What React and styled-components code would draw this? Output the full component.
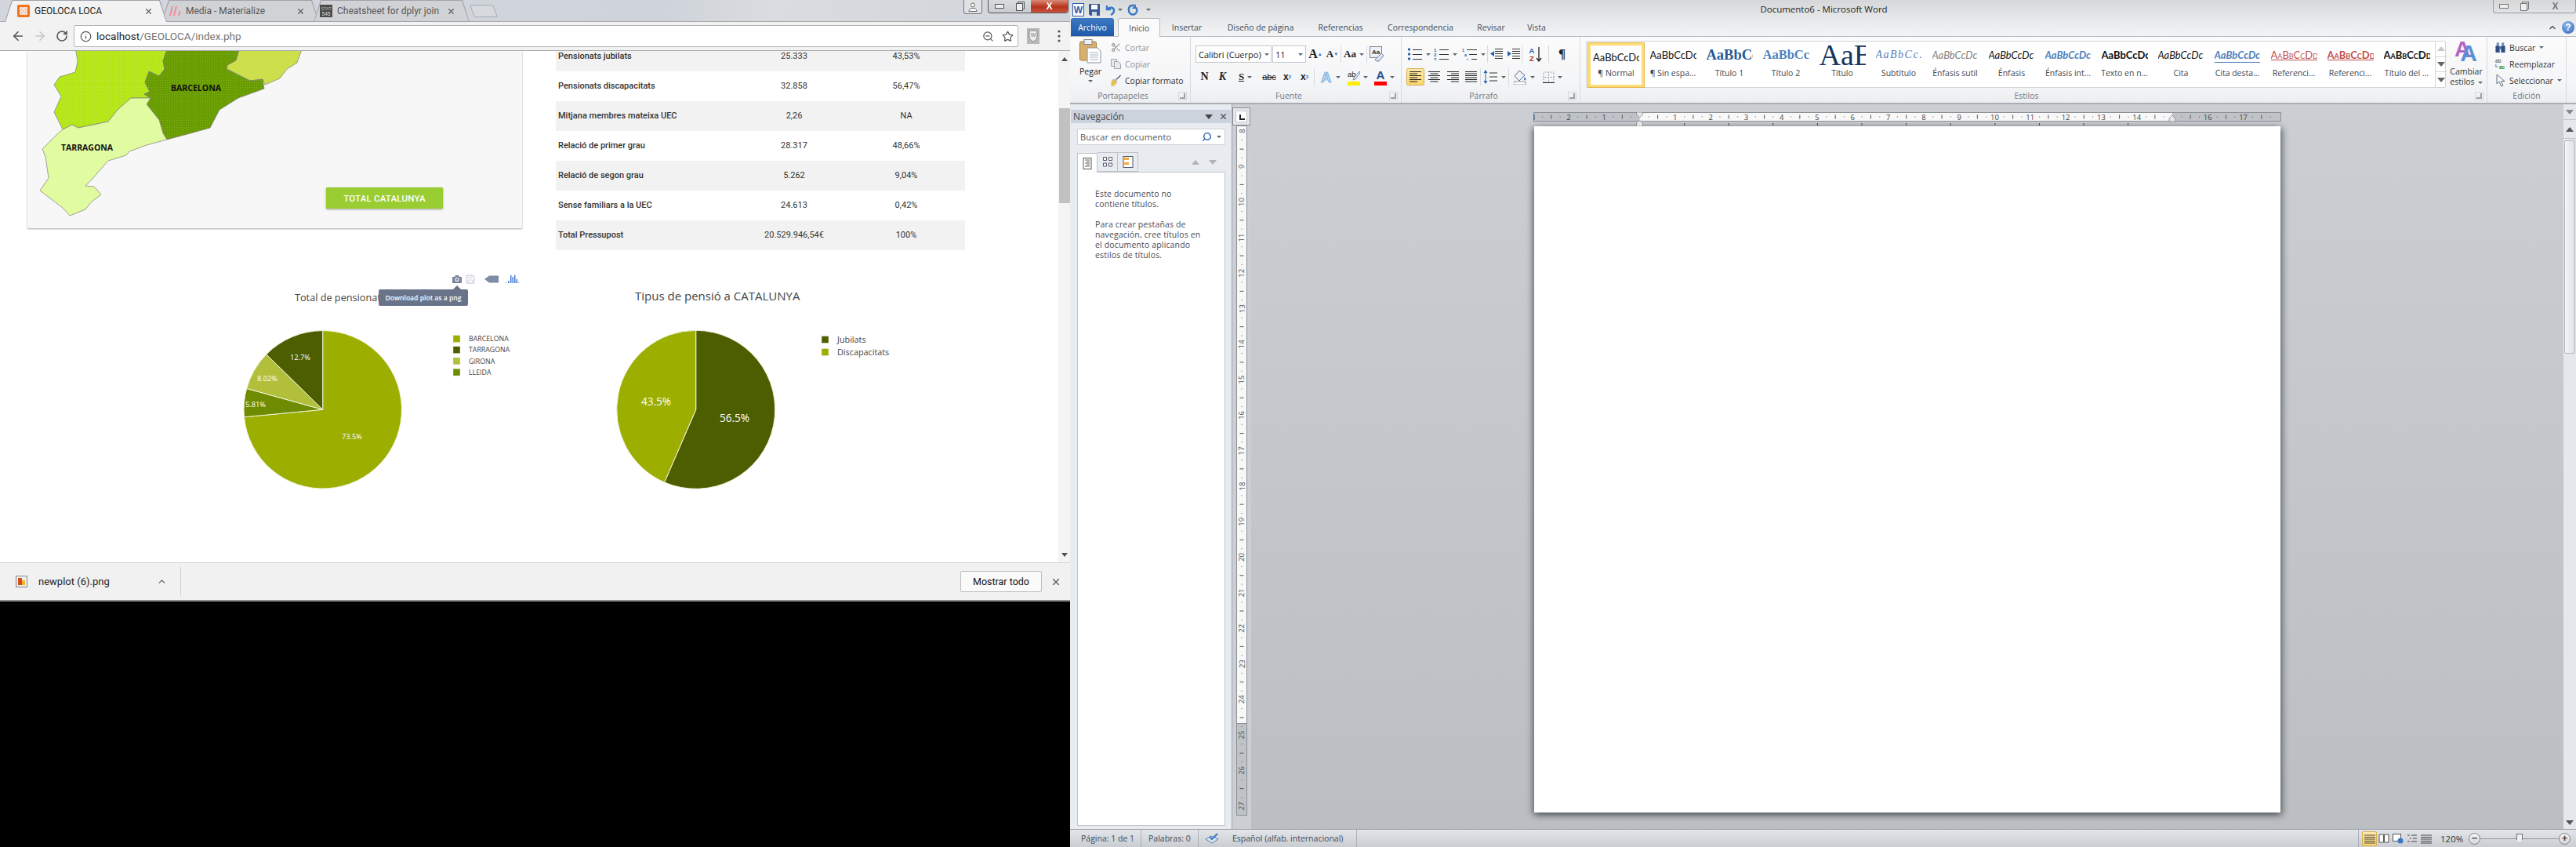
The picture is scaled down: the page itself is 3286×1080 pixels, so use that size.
import React from 'react';
import styled, { createGlobalStyle, css } from 'styled-components';
import { ArrowLeft, ArrowRight, RotateCw, Info, ZoomOut, Star, X, ChevronUp, Scissors, Search } from 'lucide-react';

const GlobalStyle = createGlobalStyle`
    html, body { margin: 0; padding: 0; background: #000; }
    * { box-sizing: border-box; }
`;

const WORD_FONT = '"Open Sans", "Noto Sans", sans-serif';

const Screen = styled.div`
    display: grid;
    grid-template-columns: 1365px 1921px;
    width: 3286px;
    height: 1080px;
    overflow: hidden;
`;

/* ---------- browser ---------- */
const BrowserColumn = styled.div`
    display: flex;
    flex-direction: column;
    height: 1080px;
    background: #000;
`;

const Browser = styled.div`
    display: flex;
    flex-direction: column;
    height: 767px;
    font-family: Roboto, sans-serif;
`;

const TabStrip = styled.div`
    display: flex;
    align-items: flex-end;
    height: 28px;
    padding-left: 6px;
    background: linear-gradient(100deg, #d3d7dd 0%, #cfd4da 62%, #d9dce0 72%, #d0d5db 100%);
    border-bottom: 1px solid #a5a8ab;
    position: relative;
`;

const Tab = styled.div`
    position: relative;
    display: flex;
    align-items: center;
    gap: 6px;
    width: ${p => p.$w}px;
    height: 28px;
    margin-right: -7px;
    margin-bottom: -1px;
    padding: 0 18px 0 ${p => p.$pad}px;
    color: #444;
    font-size: 12px;
    z-index: ${p => (p.$active ? 2 : 1)};
    background: #9fa3a7;
    clip-path: polygon(0 100%, 9px 0, calc(100% - 9px) 0, 100% 100%);
    &::before {
        content: '';
        position: absolute;
        inset: 1px 1px ${p => (p.$active ? 0 : 1)}px 1px;
        background: ${p => (p.$active ? '#f2f2f2' : '#d0d2d5')};
        clip-path: polygon(0 100%, 9px 0, calc(100% - 9px) 0, 100% 100%);
    }
    & > * { position: relative; }
`;

const TabTitle = styled.span`
    flex: 1;
    white-space: nowrap;
    overflow: hidden;
    color: ${p => (p.$active ? '#222' : '#555')};
`;

const NewTab = styled.div`
    width: 30px;
    height: 16px;
    margin: 0 0 5px 10px;
    border: 1px solid #a9adb2;
    border-radius: 2px;
    background: #d6d9dd;
    transform: skewX(20deg);
`;

const WindowButtons = styled.div`
    display: flex;
    align-items: flex-start;
    gap: 7px;
    margin-left: auto;
    margin-right: 2px;
    align-self: flex-start;
`;

const UserButton = styled.div`
    width: 24px;
    height: 18px;
    display: flex;
    align-items: center;
    justify-content: center;
    border: 1px solid #72767b;
    border-top: 0;
    border-radius: 0 0 4px 4px;
    background: #dfe2e5;
`;

const WinBox = styled.div`
    display: flex;
    width: ${p => p.$w}px;
    height: 17px;
    border: 1px solid ${p => p.$border};
    border-top: 0;
    border-radius: 0 0 4px 4px;
    overflow: hidden;
    background: ${p => p.$bg};
`;

const WinCell = styled.div`
    flex: ${p => p.$grow || 1};
    display: flex;
    align-items: center;
    justify-content: center;
    color: ${p => (p.$red ? '#fff' : '#777')};
    font: bold 12px "Liberation Sans", sans-serif;
    background: ${p => (p.$red ? 'linear-gradient(#d98a78, #b8321c 55%, #c9553f)' : 'transparent')};
`;

const Toolbar = styled.div`
    display: flex;
    align-items: center;
    height: 37px;
    padding-left: 9px;
    background: #f2f2f2;
    border-bottom: 1px solid #a9a9a9;
`;

const NavIcon = styled.div`
    width: 28px;
    margin-left: ${p => p.$gap || 0}px;
    display: flex;
    justify-content: center;
    color: ${p => p.$color};
`;

const Omnibox = styled.div`
    display: flex;
    align-items: center;
    width: 1205px;
    height: 28px;
    margin-left: 1px;
    padding: 0 0 0 7px;
    background: #fff;
    border: 1px solid #b4b4b4;
    border-radius: 2px;
    font-size: 13.5px;
    color: #222;
`;

const Url = styled.span`
    margin-left: 6px;
    flex: 1;
    span { color: #757575; }
`;

const OmniIcon = styled.div`
    width: 25px;
    display: flex;
    justify-content: center;
    color: #555;
`;

const Viewport = styled.div`
    display: flex;
    height: 652px;
    background: #fff;
`;

const Page = styled.div`
    width: 1350px;
    overflow: hidden;
`;

const TopRow = styled.div`
    display: flex;
    align-items: flex-start;
`;

const MapCard = styled.div`
    display: flex;
    align-items: flex-end;
    width: 631px;
    height: 226px;
    margin-left: 35px;
    background: #f7f7f7;
    box-shadow: 0 1px 2px rgba(0, 0, 0, 0.35);
`;

const MapDrawing = styled.svg`
    flex: none;
`;

const CatalunyaButton = styled.div`
    display: flex;
    align-items: center;
    justify-content: center;
    width: 149px;
    height: 27px;
    margin-bottom: 25px;
    background: #9acd32;
    color: #fff;
    font-size: 11.5px;
    font-weight: 500;
    letter-spacing: 0.2px;
    border-radius: 1px;
    box-shadow: 0 1px 3px rgba(0, 0, 0, 0.35);
`;

const DataTable = styled.table`
    width: 522px;
    margin-left: 43px;
    border-collapse: collapse;
    table-layout: fixed;
    font-size: 11px;
    color: #333;
    tr:nth-child(odd) { background: #f2f2f2; }
`;

const Cell = styled.td`
    height: ${p => (p.$clipped ? 26 : 38)}px;
    padding: ${p => (p.$clipped ? '0 3px 12px' : '0 3px')};
    line-height: 14px;
    text-align: ${p => (p.$name ? 'left' : 'center')};
    font-weight: ${p => (p.$name ? 500 : 400)};
    width: ${p => p.$w}px;
`;

const PlotRow = styled.div`
    display: flex;
    margin: 11px 0 0 240px;
`;

const PlotWrap = styled.div`
    position: relative;
    height: 360px;
`;

const PlotDrawing = styled.svg`
    display: block;
    font-family: "Open Sans", sans-serif;
`;

const PlotTooltip = styled.div`
    position: absolute;
    left: 243px;
    top: 39px;
    width: 114px;
    height: 21px;
    display: flex;
    align-items: center;
    justify-content: center;
    background: #69738a;
    border-radius: 2px;
    color: #fff;
    font: 600 8.6px "Open Sans", sans-serif;
    white-space: nowrap;
    &::before {
        content: '';
        position: absolute;
        top: -5px;
        left: 95px;
        border: 5px solid transparent;
        border-top: 0;
        border-bottom-color: #69738a;
    }
`;

const ScrollTrack = styled.div`
    position: relative;
    width: 15px;
    background: #f4f4f4;
    color: #555;
`;

const Thumb = styled.div`
    position: absolute;
    left: 1px;
    right: 0;
    top: 73px;
    height: 121px;
    background: #c1c1c1;
`;

const Arrow = styled.div`
    position: absolute;
    left: 4px;
    ${p => p.$pos};
    width: 0;
    height: 0;
    border-left: 4px solid transparent;
    border-right: 4px solid transparent;
    ${p => (p.$up ? 'border-bottom: 5px solid #505050;' : 'border-top: 5px solid #505050;')}
`;

const DownloadBar = styled.div`
    display: flex;
    align-items: center;
    height: 50px;
    background: #f1f1f1;
    border-top: 1px solid #d2d2d2;
    border-bottom: 2px solid #8d8d8d;
    font-size: 12.5px;
`;

const DownloadItem = styled.div`
    display: flex;
    align-items: center;
    width: 231px;
    height: 37px;
    padding-left: 20px;
    border-right: 1px solid #cfcfcf;
`;

const FileName = styled.span`
    margin-left: 14px;
    flex: 1;
    font-size: 13px;
    color: #222;
`;

const ChevronSlot = styled.div`
    display: flex;
    margin-right: 17px;
    color: #555;
`;

const ShowAll = styled.div`
    margin-left: auto;
    display: flex;
    align-items: center;
    justify-content: center;
    width: 104px;
    height: 27px;
    background: #fafafa;
    border: 1px solid #bdbdbd;
    border-radius: 2px;
    color: #111;
`;

const BarClose = styled.div`
    width: 36px;
    display: flex;
    justify-content: center;
    color: #555;
`;

/* ---------- word ---------- */
const Word = styled.div`
    display: flex;
    flex-direction: column;
    height: 1080px;
    font-family: ${WORD_FONT};
    font-size: 10.5px;
    color: #3b3b3b;
`;

const TitleArea = styled.div`
    background: linear-gradient(#d5d7d9 0%, #e4e6e7 45%, #f3f4f5 100%);
`;

const TitleBar = styled.div`
    display: grid;
    grid-template-columns: 108px 1fr 106px;
    height: 24px;
`;

const Qat = styled.div`
    display: flex;
    align-items: center;
    gap: 6px;
    padding-left: 3px;
    white-space: nowrap;
`;

const WindowTitle = styled.div`
    text-align: center;
    font-size: 11.5px;
    line-height: 24px;
    color: #222;
`;

const TabRow = styled.div`
    display: flex;
    align-items: flex-end;
    height: 23px;
    padding-left: 1px;
    border-bottom: 1px solid #b9bcc0;
    position: relative;
`;

const FileTab = styled.div`
    width: 55px;
    height: 23px;
    margin-right: 5px;
    display: flex;
    align-items: center;
    justify-content: center;
    color: #fff;
    background: linear-gradient(#3d78c4, #1e5aa8);
    border-radius: 3px 3px 0 0;
`;

const RibbonTab = styled.div`
    width: ${p => p.$w}px;
    height: 23px;
    display: flex;
    align-items: center;
    justify-content: center;
    white-space: nowrap;
    color: #3d4a5a;
    ${p => p.$active && css`
        background: #fbfbfc;
        border: 1px solid #b9bcc0;
        border-bottom: 0;
        border-radius: 3px 3px 0 0;
        margin-bottom: -1px;
        height: 24px;
    `}
`;

const TabHelp = styled.div`
    margin-left: auto;
    display: flex;
    align-items: center;
    gap: 6px;
    padding: 0 2px 3px 0;
    color: #444;
`;

const HelpBall = styled.div`
    width: 16px;
    height: 16px;
    border-radius: 50%;
    background: radial-gradient(circle at 40% 30%, #8db7ea, #2c64b8);
    color: #fff;
    font: bold 12px/16px "Liberation Sans", sans-serif;
    text-align: center;
`;

const Ribbon = styled.div`
    display: flex;
    height: 86px;
    background: linear-gradient(#fbfbfc 0%, #f4f5f6 70%, #eceef1 100%);
    border-bottom: 2px solid #a9adb3;
`;

const Group = styled.div`
    display: flex;
    flex-direction: column;
    width: ${p => p.$w}px;
    border-right: 1px solid #d7dade;
`;

const GroupBody = styled.div`
    flex: 1;
    display: flex;
    min-height: 0;
    padding-top: ${p => p.$top ?? 3}px;
    padding-left: ${p => p.$left ?? 0}px;
`;

const GroupLabel = styled.div`
    display: flex;
    align-items: center;
    height: 18px;
    color: #707a86;
`;

const LabelText = styled.span`
    flex: 1;
    text-align: center;
`;

const Launcher = styled.div`
    width: 7px;
    height: 7px;
    margin: 0 6px 0 5px;
    border-right: 2px solid #9aa0a6;
    border-bottom: 2px solid #9aa0a6;
    outline: 1px solid #d5d8dc;
    outline-offset: 1px;
`;

const PasteColumn = styled.div`
    width: 52px;
    display: flex;
    flex-direction: column;
    align-items: center;
    color: #222;
    line-height: 14px;
`;

const PasteLabel = styled.span`
    margin-top: 3px;
`;

const Caret = styled.span`
    display: inline-block;
    width: 0;
    height: 0;
    margin: ${p => p.$margin || '0 0 0 4px'};
    vertical-align: middle;
    border-left: 3px solid transparent;
    border-right: 3px solid transparent;
    border-top: 3px solid #60666e;
`;

const MenuColumn = styled.div`
    display: flex;
    flex-direction: column;
`;

const MenuRow = styled.div`
    display: flex;
    align-items: center;
    height: 22px;
    gap: 5px;
    white-space: nowrap;
    color: ${p => (p.$off ? '#8e949b' : '#333')};
`;

const MenuIcon = styled.div`
    width: 13px;
    display: flex;
    justify-content: center;
    color: #8a8f96;
`;

const ToolColumn = styled.div`
    display: flex;
    flex-direction: column;
    gap: 7px;
`;

const ToolRow = styled.div`
    display: flex;
    align-items: center;
    height: 22px;
`;

const Tool = styled.div`
    width: ${p => p.$w}px;
    height: 22px;
    display: flex;
    align-items: center;
    justify-content: center;
    color: ${p => p.$color || '#222'};
    font: ${p => p.$font || 'inherit'};
    border-right: ${p => (p.$sep ? '1px solid #d7dade' : '0')};
    ${p => p.$on && css`
        background: linear-gradient(#fde8a8, #fbd56d);
        border: 1px solid #d9ae4e;
        border-radius: 2px;
    `}
`;

const FontBox = styled.div`
    display: flex;
    align-items: center;
    width: ${p => p.$w}px;
    height: 22px;
    padding: 0 3px;
    background: #fff;
    border: 1px solid #c6cad0;
    margin-right: 1px;
    color: #222;
    font-size: 11px;
    white-space: nowrap;
    & > span:first-child { flex: 1; }
`;

const Sup = styled.sup`
    font-size: 6px;
    color: #2e6ab1;
`;

const Sub = styled.sub`
    font-size: 6px;
    color: #2e6ab1;
`;

const Gallery = styled.div`
    display: flex;
    width: 1097px;
    height: 60px;
    margin-top: 2px;
    padding: 2px 0 0 2px;
    background: #fff;
    border: 1px solid #d1d5da;
    border-radius: 2px;
`;

const StyleItem = styled.div`
    width: 72px;
    height: 56px;
    flex: none;
    display: flex;
    flex-direction: column;
    align-items: center;
    ${p => p.$active && css`
        width: 71px;
        margin-right: 1px;
        border: 3px solid #fddc75;
        outline: 1px solid #e3b651;
    `}
`;

const sampleKinds = {
    normal: css`font-family: Lato, sans-serif; font-size: 13px; color: #111;`,
    h1: css`font-family: "Liberation Serif", serif; font-size: 18.5px; font-weight: bold; color: #245a96;`,
    h2: css`font-family: "Liberation Serif", serif; font-size: 16.5px; font-weight: bold; color: #4f81bd;`,
    title: css`font-family: "Liberation Serif", serif; font-size: 38px; color: #17365d;`,
    subtitle: css`font-family: "Liberation Serif", serif; font-size: 14px; font-style: italic; letter-spacing: 1.5px; color: #4f81bd;`,
    subtle: css`font-family: Lato, sans-serif; font-size: 13px; font-style: italic; color: #808080;`,
    emphasis: css`font-family: Lato, sans-serif; font-size: 13px; font-style: italic; color: #111;`,
    intense: css`font-family: Lato, sans-serif; font-size: 13px; font-style: italic; font-weight: bold; color: #4f81bd;`,
    strong: css`font-family: Lato, sans-serif; font-size: 13px; font-weight: bold; color: #111;`,
    quote: css`font-family: Lato, sans-serif; font-size: 13px; font-style: italic; color: #111;`,
    quoteStrong: css`font-family: Lato, sans-serif; font-size: 13px; font-style: italic; font-weight: bold; color: #4f81bd; border-bottom: 1px solid #4f81bd;`,
    ref: css`font-family: Lato, sans-serif; font-size: 13px; font-variant: small-caps; color: #c0504d; text-decoration: underline;`,
    refStrong: css`font-family: Lato, sans-serif; font-size: 13px; font-variant: small-caps; font-weight: bold; color: #c0504d; text-decoration: underline;`,
    book: css`font-family: Lato, sans-serif; font-size: 13px; font-variant: small-caps; font-weight: bold; color: #111;`,
};

const Sample = styled.div`
    width: 59px;
    height: 30px;
    display: flex;
    align-items: center;
    justify-content: flex-start;
    overflow: hidden;
    white-space: nowrap;
    line-height: 30px;
    span { display: block; line-height: ${p => (p.$kind === 'quoteStrong' ? '18px' : '30px')}; ${p => sampleKinds[p.$kind]} }
`;

const StyleName = styled.div`
    margin-top: ${p => (p.$active ? -2 : 1)}px;
    color: #3f4650;
    white-space: nowrap;
`;

const GalleryArrows = styled.div`
    display: flex;
    flex-direction: column;
    flex: none;
    width: 15px;
    margin: -2px 0 0 0;
    border-left: 1px solid #d1d5da;
`;

const GalleryArrow = styled.div`
    flex: 1;
    display: flex;
    align-items: center;
    justify-content: center;
    border-bottom: 1px solid #d1d5da;
    &:last-child { border-bottom: 0; }
`;

const ChangeStyles = styled.div`
    width: 53px;
    display: flex;
    flex-direction: column;
    align-items: center;
    line-height: 13px;
    color: #333;
`;

const ChangeLabel = styled.span`
    margin-top: 6px;
`;

const StatusBar = styled.div`
    display: flex;
    align-items: center;
    height: 23px;
    background: linear-gradient(#e2e5e9, #c9cdd2);
    border-top: 1px solid #9ea2a8;
    color: #3e4a5a;
    white-space: nowrap;
`;

const StatusCell = styled.div`
    display: flex;
    align-items: center;
    height: 100%;
    width: ${p => p.$w}px;
    padding-left: ${p => p.$pad ?? 9}px;
    border-right: 1px solid #abafb5;
`;

const Language = styled.span`
    margin-left: 17px;
`;

const StatusRight = styled.div`
    display: flex;
    align-items: center;
    height: 100%;
    margin-left: auto;
    padding: 0 7px 0 4px;
    border-left: 1px solid #abafb5;
`;

const ViewButton = styled.div`
    width: ${p => p.$w || 18}px;
    height: 19px;
    display: flex;
    align-items: center;
    justify-content: center;
    ${p => p.$on && css`
        background: linear-gradient(#fde8a8, #fbd56d);
        border: 1px solid #d9ae4e;
        border-radius: 2px;
    `}
`;

const ZoomText = styled.div`
    width: 36px;
    margin-left: 9px;
    font-size: 11.5px;
    color: #333;
`;

const ZoomDot = styled.div`
    width: 15px;
    height: 15px;
    flex: none;
    border-radius: 50%;
    border: 1px solid #7d8187;
    background: linear-gradient(#f8f8f8, #d3d6da);
    display: flex;
    align-items: center;
    justify-content: center;
    color: #444;
    font: bold 13px/12px "Liberation Sans", sans-serif;
`;

const ZoomTrack = styled.div`
    position: relative;
    width: 100px;
    height: 1px;
    background: #9498a0;
`;

const ZoomThumb = styled.div`
    position: absolute;
    left: 46px;
    top: -6px;
    width: 8px;
    height: 12px;
    background: #eef0f2;
    border: 1px solid #6f7379;
    clip-path: polygon(0 0, 100% 0, 100% 65%, 50% 100%, 0 65%);
`;

const WorkArea = styled.div`
    flex: 1;
    display: flex;
    min-height: 0;
    background: linear-gradient(#cbced3, #bcbfc3);
`;

const NavPane = styled.div`
    display: flex;
    flex-direction: column;
    width: 207px;
    padding: 7px 8px 4px 9px;
    background: #e8ecf1;
    border-right: 1px solid #9ea3aa;
    position: relative;
`;

const NavHeader = styled.div`
    display: flex;
    align-items: center;
    justify-content: space-between;
    height: 17px;
    margin: 0 -7px 7px -8px;
    padding: 0 4px 0 3px;
    background: #ccd3dd;
    font-size: 12px;
    color: #3e4650;
`;

const NavHeaderTools = styled.span`
    display: flex;
    align-items: center;
    gap: 8px;
`;

const NavSearch = styled.div`
    display: flex;
    align-items: center;
    height: 21px;
    padding: 0 4px 0 3px;
    background: #fff;
    border: 1px solid #ccd1d8;
    color: #555;
    font-size: 11px;
    letter-spacing: 0.2px;
    margin-bottom: 9px;
`;

const NavSearchText = styled.span`
    flex: 1;
`;

const NavSearchIcon = styled.div`
    display: flex;
    color: #2a62ad;
    transform: scaleX(-1);
`;

const NavTabs = styled.div`
    display: flex;
    align-items: flex-end;
    height: 25px;
`;

const NavTab = styled.div`
    width: 26px;
    height: 25px;
    display: flex;
    align-items: center;
    justify-content: center;
    border: 1px solid #bdc3cb;
    border-left-width: ${p => (p.$first ? 1 : 0)}px;
    border-bottom: ${p => (p.$first ? '0' : '1px solid #bdc3cb')};
    background: ${p => (p.$first ? '#fff' : '#e8ecf1')};
    margin-bottom: ${p => (p.$first ? -1 : 0)}px;
    position: relative;
`;

const NavArrows = styled.div`
    margin-left: auto;
    display: flex;
    gap: 12px;
    padding: 0 11px 9px 0;
`;

const NavContent = styled.div`
    flex: 1;
    padding: 21px 8px 0 22px;
    background: #fff;
    border: 1px solid #bdc3cb;
    line-height: 13px;
    font-size: 10.5px;
    letter-spacing: 0.15px;
    color: #4a4a55;
    p { margin: 0 0 13px; }
`;

const RulerColumn = styled.div`
    width: 24px;
    display: flex;
    flex-direction: column;
    padding-top: 4px;
    background: #cbced3;
`;

const RulerCorner = styled.div`
    width: 23px;
    height: 23px;
    padding: 3px;
    border: 1px solid #8b9097;
    background: #e4e7ea;
`;

const RulerCornerInner = styled.div`
    width: 15px;
    height: 15px;
    background: #fff;
    border: 1px solid #c5c8cc;
    display: flex;
    align-items: center;
    justify-content: center;
    &::before {
        content: '';
        width: 5px;
        height: 5px;
        margin: 0 0 -1px 1px;
        border-left: 2px solid #222;
        border-bottom: 2px solid #222;
    }
`;

const VerticalRuler = styled.svg`
    display: block;
    margin-left: 5px;
`;

const DocArea = styled.div`
    flex: 1;
    padding-top: 10px;
    overflow: hidden;
    background: linear-gradient(#cbced3, #bbbec2);
`;

const HorizontalRuler = styled.svg`
    display: block;
    margin-left: 360px;
`;

const Sheet = styled.div`
    width: 952px;
    height: 875px;
    margin-left: 361px;
    background: #fff;
    box-shadow: -2px 2px 8px rgba(60, 64, 70, 0.65), 3px 3px 8px rgba(60, 64, 70, 0.55);
`;

const WordScroll = styled.div`
    display: flex;
    flex-direction: column;
    align-items: center;
    width: 16px;
    background: #e4e7ec;
`;

const ScrollCell = styled.div`
    width: 16px;
    height: ${p => p.$h}px;
    display: flex;
    align-items: center;
    justify-content: center;
    border-bottom: ${p => (p.$line ? '1px solid #c3c7cd' : 0)};
    color: #555;
    font-size: 9px;
`;

const ScrollThumb = styled.div`
    width: 14px;
    height: 272px;
    margin-top: 2px;
    margin-bottom: auto;
    background: linear-gradient(90deg, #f3f5f7, #dde1e6);
    border: 1px solid #b3b7bd;
    border-radius: 2px;
`;

/* ---------- drawings ---------- */
const XamppIcon = () => (
    <svg width="16" height="16" viewBox="0 0 16 16">
        <rect width="16" height="16" rx="2" fill="#f0741f" />
        <path d="M4 4h3v3H4zM9 4h3v3H9zM4 9h3v3H4zM9 9h3v3H9z" fill="none" stroke="#fff" strokeWidth="1.5" />
    </svg>
);

const MaterializeIcon = () => (
    <svg width="15" height="12" viewBox="0 0 15 12">
        <path d="M0 12 3 0h2L2 12zM5 12 8 0h2L7 12zM11 12l1.5-6h2L13 12z" fill="#f38b98" />
    </svg>
);

const StatIcon = () => (
    <svg width="16" height="16" viewBox="0 0 16 16">
        <rect width="16" height="16" fill="#4b4b4b" />
        <text x="8" y="7" fontSize="5.5" fill="#bbb" textAnchor="middle" fontFamily="Liberation Sans">STAT</text>
        <text x="8" y="14" fontSize="6.5" fill="#ddd" textAnchor="middle" fontFamily="Liberation Sans">545</text>
    </svg>
);

const ShieldIcon = () => (
    <svg width="16" height="20" viewBox="0 0 16 20">
        <rect width="16" height="20" fill="#b8b8b8" />
        <path d="M3 3h10v8c0 3-3 5-5 6-2-1-5-3-5-6z" fill="#eee" stroke="#888" />
        <text x="8" y="11" fontSize="7" fill="#777" textAnchor="middle" fontFamily="Liberation Sans">W</text>
    </svg>
);

const MenuDots = () => (
    <svg width="4" height="16">
        <circle cx="2" cy="2" r="1.6" fill="#555" />
        <circle cx="2" cy="8" r="1.6" fill="#555" />
        <circle cx="2" cy="14" r="1.6" fill="#555" />
    </svg>
);

const UserIcon = () => (
    <svg width="12" height="12" viewBox="0 0 12 12">
        <circle cx="6" cy="3.5" r="2.5" fill="#fff" stroke="#666" />
        <path d="M1 11.5c0-3 2-4 5-4s5 1 5 4z" fill="#fff" stroke="#666" />
    </svg>
);

const MinimizeGlyph = ({ color }) => (
    <svg width="12" height="7">
        <rect x=".5" y=".5" width="11" height="5" fill="#eee" stroke={color} />
    </svg>
);

const RestoreGlyph = ({ color }) => (
    <svg width="12" height="12">
        <rect x="2.5" y=".5" width="8" height="9" fill="none" stroke={color} />
        <rect x=".5" y="2.5" width="8" height="9" fill="#eee" stroke={color} />
    </svg>
);

const PngFileIcon = () => (
    <svg width="15" height="15" viewBox="0 0 15 15">
        <rect x=".5" y=".5" width="14" height="14" fill="#eee" stroke="#888" />
        <path d="M3 3h5v9H3z" fill="#d8491f" />
        <path d="M8 6h4v6H8z" fill="#efb52c" />
    </svg>
);

const WordLogo = () => (
    <svg width="15" height="17" viewBox="0 0 15 17">
        <rect x="0.5" y="0.5" width="14" height="16" fill="#fff" stroke="#2a5caa" />
        <text x="7.5" y="13" fontSize="12" fontWeight="bold" fill="#2a5caa" textAnchor="middle" fontFamily="Liberation Sans">W</text>
    </svg>
);

const SaveIcon = () => (
    <svg width="14" height="15" viewBox="0 0 14 15">
        <path d="M0 0h14v15H2l-2-2z" fill="#3b5a94" />
        <rect x="3" y="1" width="8" height="6" fill="#fff" />
        <rect x="4" y="10" width="6" height="5" fill="#cfd6e3" />
    </svg>
);

const UndoIcon = () => (
    <svg width="14" height="15" viewBox="0 0 14 15" fill="none">
        <path d="M3 2v5h5" stroke="#3a78c4" strokeWidth="2.4" />
        <path d="M3.5 7C6 3.5 12 4 12 8.5c0 2.5-2 4.5-4 5.5" stroke="#3a78c4" strokeWidth="2.4" />
    </svg>
);

const RedoIcon = () => (
    <svg width="14" height="15" viewBox="0 0 14 15" fill="none">
        <path d="M9 1.5 4 2.5C1 4.5 1 10 4 12.5c3 2 7 1 8-2.5 .5-2 0-4-1-5.500" stroke="#3a78c4" strokeWidth="2.4" />
        <path d="M11 0v6H6" fill="#3a78c4" />
    </svg>
);

const PasteIcon = () => (
    <svg width="28" height="31" viewBox="0 0 28 31">
        <rect x="0.5" y="3" width="21" height="24" rx="2" fill="#d8b06a" stroke="#a57f3f" />
        <rect x="6" y="0.5" width="10" height="6" fill="#eceff3" stroke="#808690" />
        <path d="M10 11h13l4 4v15H10z" fill="#fff" stroke="#8b929b" />
        <path d="M13 17h11M13 20h11M13 23h11M13 26h11" stroke="#9fb0c7" />
    </svg>
);

const CopyIcon = () => (
    <svg width="13" height="13" viewBox="0 0 13 13" fill="#e8eaed" stroke="#a0a4aa">
        <path d="M.5.5h7v9h-7z" />
        <path d="M4.5 3.5h5l3 3v6h-8z" />
    </svg>
);

const BrushIcon = () => (
    <svg width="14" height="15" viewBox="0 0 14 15">
        <path d="M13 0 14 1 8 7 7 6z" fill="#4d5d7c" />
        <path d="M6 5l3 3-1 2-4-4z" fill="#b8bcc4" />
        <path d="M3.5 6 8 10.5c-1 2.5-3.5 4-7 4.5 1-1 0-1.5 0-3 0-2 1-4.5 2.5-6z" fill="#efc74e" stroke="#b08a25" strokeWidth=".6" />
    </svg>
);

const ClearIcon = () => (
    <svg width="18" height="21" viewBox="0 0 18 21">
        <rect x="0.5" y="0.5" width="15" height="14" fill="#eef2f7" stroke="#7b8696" />
        <text x="8" y="10" fontSize="8" fontWeight="bold" fill="#333" textAnchor="middle" fontFamily="Liberation Sans">Aa</text>
        <path d="M9 15l6-6 3 3-6 7h-3l-2-2z" fill="#dfe6f2" stroke="#6d7f9c" />
    </svg>
);

const ListIcon = ({ marks }) => (
    <svg width="20" height="16" viewBox="0 0 20 16">
        {[2, 8, 14].map((y, i) => (
            <g key={y}>
                {marks === 'dots' && <circle cx="2.5" cy={y} r="1.7" fill="#2a62ad" />}
                {marks === 'nums' && <text x="0" y={y + 2.5} fontSize="6" fontWeight="bold" fill="#2a62ad" fontFamily="Liberation Sans">{i + 1}</text>}
                {marks === 'tree' && <text x={i * 3} y={y + 2.5} fontSize="5.5" fontWeight="bold" fill="#2a62ad" fontFamily="Liberation Sans">{['1', 'a', 'i'][i]}</text>}
                <rect x={marks === 'tree' ? 6 + i * 3 : 7} y={y} width={marks === 'tree' ? 13 - i * 3 : 12} height="1" fill="#333" />
            </g>
        ))}
    </svg>
);

const IndentIcon = ({ dir }) => (
    <svg width="18" height="16" viewBox="0 0 18 16">
        {[1, 4, 7, 10, 13].map(y => <rect key={y} x="7" y={y} width="10" height="1" fill="#333" />)}
        <path d={dir === 'left' ? 'M6 4v7L1 7.5z' : 'M1 4v7l5-3.5z'} fill="#2a62ad" />
    </svg>
);

const SortIcon = () => (
    <svg width="19" height="21" viewBox="0 0 19 21">
        <text x="5" y="9" fontSize="9.5" fontWeight="bold" fill="#2a62ad" textAnchor="middle" fontFamily="Liberation Sans">A</text>
        <text x="5" y="19" fontSize="9.5" fontWeight="bold" fill="#a0342d" textAnchor="middle" fontFamily="Liberation Sans">Z</text>
        <path d="M14 1v17M11 15l3 4 3-4" fill="none" stroke="#222" strokeWidth="1.3" />
    </svg>
);

const AlignIcon = ({ mode }) => {
    const lines = [0, 1, 2, 3, 4, 5];
    const short = mode === 'justify' ? 15 : 10;
    return (
        <svg width="15" height="14" viewBox="0 0 15 14">
            {lines.map(i => {
                const w = i % 2 ? short : 15;
                const x = mode === 'right' ? 15 - w : mode === 'center' ? (15 - w) / 2 : 0;
                return <rect key={i} x={x} y={i * 2.5} width={w} height="1" fill="#222" />;
            })}
        </svg>
    );
};

const SpacingIcon = () => (
    <svg width="19" height="20" viewBox="0 0 19 20">
        <path d="M3 1 .5 5h5zM3 19 .5 15h5zM2.500 5h1v10h-1z" fill="#2a62ad" />
        <path d="M8 5h10M8 10h10M8 15h10" stroke="#333" />
    </svg>
);

const ShadeIcon = () => (
    <svg width="17" height="19" viewBox="0 0 17 19">
        <path d="M7 1 1 8l6 6 7-7z" fill="#eef1f5" stroke="#5b6a80" />
        <path d="M14 9c1.5 2 2 3 1 4s-2 0-2-1 .5-2 1-3z" fill="#3a78c4" />
        <rect x="0" y="15" width="15" height="4" fill="#fff" stroke="#8b929b" />
    </svg>
);

const BorderIcon = () => (
    <svg width="15" height="15" viewBox="0 0 15 15">
        <rect x="1" y="1" width="13" height="13" fill="none" stroke="#8a8f96" strokeDasharray="1 1" />
        <path d="M7.5 1v13M1 7.5h13" stroke="#8a8f96" strokeDasharray="1 1" />
        <path d="M0 14.5h15" stroke="#222" />
    </svg>
);

const GlowA = () => (
    <svg width="17" height="20" viewBox="0 0 17 20">
        <text x="8.5" y="17" fontSize="19" fontWeight="bold" fill="#bcd8f3" stroke="#5b97d5" strokeWidth=".7" textAnchor="middle" fontFamily="Liberation Sans">A</text>
    </svg>
);

const HighlightIcon = () => (
    <svg width="16" height="21" viewBox="0 0 16 21">
        <text x="0" y="10" fontSize="9.5" fill="#222" fontFamily="Liberation Sans">ab</text>
        <path d="M15 3 8 11l-1 3 3-1 6-8z" fill="#dbe5f3" stroke="#5470a0" strokeWidth=".7" />
        <rect x="0" y="16" width="16" height="5" fill="#ffee00" />
    </svg>
);

const ColorA = () => (
    <svg width="16" height="21" viewBox="0 0 16 21">
        <text x="8" y="13" fontSize="15" fontWeight="bold" fill="#1f4e96" textAnchor="middle" fontFamily="Liberation Sans">A</text>
        <rect x="0" y="16" width="16" height="5" fill="#f00" />
    </svg>
);

const ChangeStylesIcon = () => (
    <svg width="28" height="29" viewBox="0 0 28 29">
        <text x="9" y="22" fontSize="28" fontWeight="bold" fill="#b264c4" textAnchor="middle" fontFamily="Liberation Sans">A</text>
        <text x="17" y="28" fontSize="30" fontWeight="bold" fill="#5b8fd6" textAnchor="middle" fontFamily="Liberation Sans">A</text>
    </svg>
);

const BinocularsIcon = () => (
    <svg width="15" height="15" viewBox="0 0 15 15">
        <rect x="0.5" y="5" width="6" height="10" rx="1" fill="#2d4f85" />
        <rect x="8.5" y="5" width="6" height="10" rx="1" fill="#2d4f85" />
        <rect x="2" y="0.5" width="3.5" height="5" fill="#6c8ab8" />
        <rect x="9.5" y="0.5" width="3.5" height="5" fill="#6c8ab8" />
        <rect x="6" y="6" width="3" height="4" fill="#5e6f8a" />
    </svg>
);

const ReplaceIcon = () => (
    <svg width="16" height="17" viewBox="0 0 16 17">
        <text x="0" y="7" fontSize="8" fontWeight="bold" fill="#777" fontFamily="Liberation Sans">ab</text>
        <text x="6" y="16" fontSize="8" fontWeight="bold" fill="#2a8a2a" fontFamily="Liberation Sans">ac</text>
        <path d="M1 9v4h3" fill="none" stroke="#2a62ad" />
    </svg>
);

const CursorIcon = () => (
    <svg width="12" height="17" viewBox="0 0 12 17">
        <path d="M1 1v12l3-3 2.5 6 2.5-1-2.5-5.5H11z" fill="#f6f7f9" stroke="#6b7280" />
    </svg>
);

const CameraIcon = ({ color }) => (
    <svg width="12" height="10" viewBox="0 0 12 10" x="577" y="351">
        <path d="M0 2h3l1-2h4l1 2h3v8H0z" fill={color} />
        <circle cx="6" cy="5.5" r="2.5" fill="#fff" />
        <circle cx="6" cy="5.5" r="1.4" fill={color} />
    </svg>
);

const ProofIcon = () => (
    <svg width="18" height="14" viewBox="0 0 18 14">
        <path d="M1 8 8 4l9 4-8 5z" fill="#dfe6f2" stroke="#5b7fb0" />
        <path d="M6 5l3 3 7-7" fill="none" stroke="#3a78c4" strokeWidth="2" />
    </svg>
);

const ViewIcon = ({ kind }) => (
    <svg width="14" height="13" viewBox="0 0 14 13">
        {kind === 'book' && <path d="M1 1h5.5v10H1zM7.5 1H13v10H7.5z" fill="#fff" stroke="#555" />}
        {kind === 'web' && <>
            <rect x="0.5" y="0.5" width="10" height="9" fill="#fff" stroke="#555" />
            <circle cx="10" cy="9" r="3.5" fill="#3a78c4" />
        </>}
        {kind === 'outline' && <path d="M1 2h3M6 2h7M4 6h2M8 6h5M1 10h3M6 10h7" stroke="#444" />}
        {(kind === 'draft' || kind === 'page') && <path d="M0 2h14M0 4.5h14M0 7h14M0 9.5h14M0 12h14" stroke="#444" />}
    </svg>
);

const NavTabIcon = ({ kind }) => (
    <svg width="14" height="15" viewBox="0 0 14 15">
        {kind === 'headings' && <>
            <rect x="2" y="0.5" width="10" height="14" fill="#fff" stroke="#555" />
            <path d="M4 3h6M6 5h4M4 7h6M6 9h4M4 11h6" stroke="#666" />
        </>}
        {kind === 'pages' && <path d="M1.5 1.5h4v4h-4zM8.5 1.5h4v4h-4zM1.5 9h4v4h-4zM8.5 9h4v4h-4z" fill="#fff" stroke="#556" />}
        {kind === 'results' && <>
            <rect x="1" y="0.5" width="12" height="14" fill="#fff" stroke="#556" />
            <rect x="1" y="2" width="7" height="3" fill="#f0a93a" />
            <rect x="1" y="8" width="7" height="3" fill="#f0a93a" />
        </>}
    </svg>
);

const TinyTriangle = ({ up, color }) => (
    <svg width="10" height="6" viewBox="0 0 10 6">
        <path d={up ? 'M0 6 5 0l5 6z' : 'M0 0h10L5 6z'} fill={color} />
    </svg>
);

const tarragona = '167,125 192,125 187,133 203,153 208,170 213,178 187,185 165,193 161,198 138,205 116,230 109,237 120,238 129,248 116,258 109,267 89,275 80,265 51,243 62,227 58,200 54,190 74,170 80,165 92,159 100,163 138,155 150,140';
const lleida = '96,60 214,60 208,78 210,88 203,97 190,91 185,105 191,117 184,120 192,125 167,125 150,140 138,155 100,163 92,159 80,165 69,143 78,123 69,108 76,98 96,92 99,78';
const barcelona = '214,60 306,60 301,77 290,83 289,88 319,103 335,101 337,113 304,125 280,140 268,163 243,170 213,178 208,170 203,153 187,133 192,125 184,120 191,117 185,105 190,91 203,97 210,88 208,78';
const girona = '306,60 386,60 379,80 366,88 357,100 338,108 335,101 319,103 289,88 290,83 301,77';

const CatalunyaMap = () => (
    <MapDrawing width="381" height="226" viewBox="35 65 381 226">
        <defs>
            <pattern id="lleidaDots" width="3" height="3" patternUnits="userSpaceOnUse">
                <rect width="3" height="3" fill="#b4e617" />
                <rect width="1" height="1" fill="#c4ee45" />
            </pattern>
            <pattern id="bcnDots" width="3" height="3" patternUnits="userSpaceOnUse">
                <rect width="3" height="3" fill="#689c00" />
                <rect width="1" height="1" fill="#82b122" />
            </pattern>
        </defs>
        <g stroke="#7d7d7d" strokeWidth=".7">
            <polygon points={lleida} fill="url(#lleidaDots)" />
            <polygon points={girona} fill="#cde04c" />
            <polygon points={barcelona} fill="url(#bcnDots)" />
            <polygon points={tarragona} fill="#e0fba0" />
        </g>
        <g fontFamily="Open Sans" fontWeight="700" fontSize="10.5" fill="#111" textAnchor="middle">
            <text x="250" y="116">BARCELONA</text>
            <text x="111" y="192">TARRAGONA</text>
        </g>
    </MapDrawing>
);

const polar = (cx, cy, r, pct) => {
    const a = (pct / 100) * 2 * Math.PI;
    return [cx + r * Math.sin(a), cy - r * Math.cos(a)];
};

const slicePath = (cx, cy, r, from, to) => {
    const [x0, y0] = polar(cx, cy, r, from);
    const [x1, y1] = polar(cx, cy, r, to);
    const large = to - from > 50 ? 1 : 0;
    return `M${cx} ${cy}L${x0} ${y0}A${r} ${r} 0 ${large} 1 ${x1} ${y1}Z`;
};

const Pie = ({ cx, cy, r, slices }) => {
    let at = 0;
    return slices.map(s => {
        const d = slicePath(cx, cy, r, at, at + s.pct);
        at += s.pct;
        return <path key={s.color} d={d} fill={s.color} stroke="#f1f3dc" strokeWidth="1" />;
    });
};

const Legend = ({ x, items, step, size, y }) => items.map((it, i) => (
    <g key={it.name}>
        <rect x={x} y={y + i * step - 4.5} width="9" height="9" fill={it.color} stroke="#eef0d8" strokeWidth=".5" />
        <text x={x + 20} y={y + i * step + size * 0.36} fontSize={size} fill="#444">{it.name}</text>
    </g>
));

const PieLabels = ({ labels, size }) => labels.map(l => (
    <text key={l.t} x={l.x} y={l.y + size * 0.36} fontSize={size} fill="#fff" textAnchor="middle">{l.t}</text>
));

const LeftPlot = () => (
    <PlotDrawing width="480" height="360" viewBox="240 330 480 360">
        <text x="376" y="384" fontSize="12.7" fill="#444">Total de pensionats</text>
        <Pie cx={411.7} cy={522.3} r={100.7} slices={[
            { pct: 73.5, color: '#9cae00' },
            { pct: 5.81, color: '#6f8c00' },
            { pct: 8.02, color: '#b2bf3a' },
            { pct: 12.67, color: '#4d5e00' },
        ]} />
        <PieLabels size={9.3} labels={[
            { t: '73.5%', x: 449, y: 556.5 },
            { t: '12.7%', x: 383, y: 455.5 },
            { t: '8.02%', x: 341, y: 482.5 },
            { t: '5.81%', x: 326, y: 515.5 },
        ]} />
        <Legend x={578} y={432} step={14.2} size={8.8} items={[
            { name: 'BARCELONA', color: '#9cae00' },
            { name: 'TARRAGONA', color: '#4d5e00' },
            { name: 'GIRONA', color: '#b2bf3a' },
            { name: 'LLEIDA', color: '#6f8c00' },
        ]} />
        <CameraIcon color="#7a86a0" />
        <path d="M595 351h8l2 2v8h-10z" fill="none" stroke="#cdd2dc" strokeWidth="1.2" />
        <path d="M597 351h5v3h-5zM597 357h6v4h-6z" fill="none" stroke="#cdd2dc" />
        <path d="M618 356l6-4.5h12v9h-12z" fill="#7f8ca6" />
        <path d="M645 361h1v-1h-1zM648 361h1.500v-3H648zM651 361h1.500v-10H651zM653.500 361h1.500v-8h-1.500zM656 361h1.500v-10H656zM658.500 361h1.500v-5h-1.500zM661 361h1v-1h-1z" fill="#447adb" />
    </PlotDrawing>
);

const RightPlot = () => (
    <PlotDrawing width="620" height="360" viewBox="720 330 620 360">
        <text x="810" y="383" fontSize="15" fill="#444">Tipus de pensió a CATALUNYA</text>
        <Pie cx={887.7} cy={522.3} r={101} slices={[
            { pct: 56.5, color: '#4d5e00' },
            { pct: 43.5, color: '#9cae00' },
        ]} />
        <PieLabels size={13.6} labels={[
            { t: '43.5%', x: 837, y: 512 },
            { t: '56.5%', x: 937, y: 533 },
        ]} />
        <Legend x={1048} y={433} step={16} size={10.8} items={[
            { name: 'Jubilats', color: '#4d5e00' },
            { name: 'Discapacitats', color: '#9cae00' },
        ]} />
    </PlotDrawing>
);

const ticks = (origin, step, from, to) => {
    const out = [];
    for (let i = from; i < to; i++) {
        out.push({ at: origin + i * step + step / 4, kind: 'dot' });
        out.push({ at: origin + i * step + step / 2, kind: 'dash' });
        out.push({ at: origin + i * step + (3 * step) / 4, kind: 'dot' });
    }
    return out;
};

const HRuler = () => {
    const zero = 135.5;
    const step = 45.3;
    const labels = [-3, -2, -1, 1, 2, 3, 4, 5, 6, 7, 8, 9, 10, 11, 12, 13, 14, 16, 17];
    const tabs = Array.from({ length: 11 }, (_, i) => zero + 56.6 * (i + 1));
    return (
        <HorizontalRuler width="955" height="18">
            <rect x="0.5" y="0.5" width="953" height="11" fill="#bfc3c8" stroke="#8b9097" />
            <rect x={zero} y="1" width={815 - zero} height="10" fill="#f8f8f8" />
            {ticks(zero, step, -3, 18).filter(t => t.at > 2 && t.at < 950).map(t => (
                <rect key={t.at} x={t.at} y={t.kind === 'dash' ? 3.5 : 5.5} width="1" height={t.kind === 'dash' ? 5 : 1} fill="#555" />
            ))}
            {labels.map(n => (
                <text key={n} x={zero + n * step} y="9.5" fontSize="9.5" fill="#444" textAnchor="middle" fontFamily="Open Sans">{Math.abs(n)}</text>
            ))}
            {tabs.map(x => <rect key={x} x={x} y="14" width="1" height="3" fill="#444" />)}
            <path d={`M${zero - 4} 0h8v3l-4 4-4-4zM${zero - 4} 14l4-4 4 4v4h-8z`} fill="#e4e6e8" stroke="#777" strokeWidth=".7" />
            <path d="M811 12V8l4-4 4 4v4z" fill="#e4e6e8" stroke="#777" strokeWidth=".7" />
        </HorizontalRuler>
    );
};

const VRuler = () => {
    const start = 7;
    const step = 45.3;
    const nums = Array.from({ length: 20 }, (_, i) => i + 8);
    return (
        <VerticalRuler width="14" height="880">
            <rect x="0.5" y="0.5" width="13" height="879" fill="#bfc3c8" stroke="#8b9097" />
            <rect x="1" y="1" width="12" height="761" fill="#f8f8f8" />
            <rect x="1" y="762" width="12" height="1" fill="#8b9097" />
            {ticks(start, step, 0, 19).map(t => (
                <rect key={t.at} x={t.kind === 'dash' ? 4.5 : 6.5} y={t.at} width={t.kind === 'dash' ? 5 : 1} height="1" fill="#555" />
            ))}
            {nums.map((n, i) => (
                <text key={n} x="10.5" y={start + i * step} transform={`rotate(-90 10.5 ${start + i * step})`} fontSize="9.5" fill="#555" textAnchor="middle" fontFamily="Open Sans">{n}</text>
            ))}
        </VerticalRuler>
    );
};

const rows = [
    ['Pensionats jubilats', '25.333', '43,53%'],
    ['Pensionats discapacitats', '32.858', '56,47%'],
    ['Mitjana membres mateixa UEC', '2,26', 'NA'],
    ['Relació de primer grau', '28.317', '48,66%'],
    ['Relació de segon grau', '5.262', '9,04%'],
    ['Sense familiars a la UEC', '24.613', '0,42%'],
    ['Total Pressupost', '20.529.946,54€', '100%'],
];

const galleryStyles = [
    ['normal', '¶ Normal', 'AaBbCcDc'],
    ['normal', '¶ Sin espa...', 'AaBbCcDc'],
    ['h1', 'Título 1', 'AaBbCc'],
    ['h2', 'Título 2', 'AaBbCc'],
    ['title', 'Título', 'AaB'],
    ['subtitle', 'Subtítulo', 'AaBbCc.'],
    ['subtle', 'Énfasis sutil', 'AaBbCcDc'],
    ['emphasis', 'Énfasis', 'AaBbCcDc'],
    ['intense', 'Énfasis int...', 'AaBbCcDc'],
    ['strong', 'Texto en n...', 'AaBbCcDc'],
    ['quote', 'Cita', 'AaBbCcDc'],
    ['quoteStrong', 'Cita desta...', 'AaBbCcDc'],
    ['ref', 'Referenci...', 'AaBbCcDd'],
    ['refStrong', 'Referenci...', 'AaBbCcDd'],
    ['book', 'Título del ...', 'AaBbCcDd'],
];

const wordTabs = [['Insertar', 68], ['Diseño de página', 120], ['Referencias', 84], ['Correspondencia', 120], ['Revisar', 60], ['Vista', 56]];

const BrowserWindow = () => (
    <Browser>
        <TabStrip>
            <Tab $w={207} $pad={16} $active><XamppIcon /><TabTitle $active>GEOLOCA LOCA</TabTitle><X size={11} strokeWidth={3} color="#666" /></Tab>
            <Tab $w={201} $pad={10}><MaterializeIcon /><TabTitle>Media - Materialize</TabTitle><X size={11} strokeWidth={3} color="#666" /></Tab>
            <Tab $w={199} $pad={8}><StatIcon /><TabTitle>Cheatsheet for dplyr join</TabTitle><X size={11} strokeWidth={3} color="#666" /></Tab>
            <NewTab />
            <WindowButtons>
                <UserButton><UserIcon /></UserButton>
                <WinBox $w={103} $border="#55595e" $bg="linear-gradient(#d9dcdf, #c8ccd0)">
                    <WinCell $grow={27}><MinimizeGlyph color="#555" /></WinCell>
                    <WinCell $grow={27}><RestoreGlyph color="#555" /></WinCell>
                    <WinCell $grow={47} $red>X</WinCell>
                </WinBox>
            </WindowButtons>
        </TabStrip>
        <Toolbar>
            <NavIcon $color="#555"><ArrowLeft size={18} strokeWidth={2.2} /></NavIcon>
            <NavIcon $color="#c6c6c6"><ArrowRight size={18} strokeWidth={2.2} /></NavIcon>
            <NavIcon $color="#555"><RotateCw size={16} strokeWidth={2.4} /></NavIcon>
            <Omnibox>
                <Info size={15} color="#555" />
                <Url>localhost<span>/GEOLOCA/index.php</span></Url>
                <OmniIcon><ZoomOut size={15} /></OmniIcon>
                <OmniIcon><Star size={15} /></OmniIcon>
            </Omnibox>
            <NavIcon $color="#888" $gap={5}><ShieldIcon /></NavIcon>
            <NavIcon $color="#555" $gap={5}><MenuDots /></NavIcon>
        </Toolbar>
        <Viewport>
            <Page>
                <TopRow>
                    <MapCard>
                        <CatalunyaMap />
                        <CatalunyaButton>TOTAL CATALUNYA</CatalunyaButton>
                    </MapCard>
                    <DataTable>
                        <tbody>
                            {rows.map((r, i) => (
                                <tr key={r[0]}>
                                    <Cell $w={236} $name $clipped={i === 0}>{r[0]}</Cell>
                                    <Cell $w={136} $clipped={i === 0}>{r[1]}</Cell>
                                    <Cell $w={150} $clipped={i === 0}>{r[2]}</Cell>
                                </tr>
                            ))}
                        </tbody>
                    </DataTable>
                </TopRow>
                <PlotRow>
                    <PlotWrap>
                        <LeftPlot />
                        <PlotTooltip>Download plot as a png</PlotTooltip>
                    </PlotWrap>
                    <PlotWrap><RightPlot /></PlotWrap>
                </PlotRow>
            </Page>
            <ScrollTrack>
                <Arrow $up $pos="top: 8px" />
                <Thumb />
                <Arrow $pos="bottom: 7px" />
            </ScrollTrack>
        </Viewport>
        <DownloadBar>
            <DownloadItem>
                <PngFileIcon />
                <FileName>newplot (6).png</FileName>
                <ChevronSlot><ChevronUp size={13} /></ChevronSlot>
            </DownloadItem>
            <ShowAll>Mostrar todo</ShowAll>
            <BarClose><X size={14} strokeWidth={2.2} /></BarClose>
        </DownloadBar>
    </Browser>
);

const WordRibbon = () => (
    <Ribbon>
        <Group $w={154}>
            <GroupBody>
                <PasteColumn>
                    <PasteIcon />
                    <PasteLabel>Pegar</PasteLabel>
                    <Caret $margin="4px 0 0" />
                </PasteColumn>
                <MenuColumn>
                    <MenuRow $off><MenuIcon><Scissors size={13} /></MenuIcon>Cortar</MenuRow>
                    <MenuRow $off><MenuIcon><CopyIcon /></MenuIcon>Copiar</MenuRow>
                    <MenuRow><MenuIcon><BrushIcon /></MenuIcon>Copiar formato</MenuRow>
                </MenuColumn>
            </GroupBody>
            <GroupLabel><LabelText>Portapapeles</LabelText><Launcher /></GroupLabel>
        </Group>
        <Group $w={269}>
            <GroupBody $top={11} $left={6}>
                <ToolColumn>
                    <ToolRow>
                        <FontBox $w={97}><span>Calibri (Cuerpo)</span><Caret /></FontBox>
                        <FontBox $w={43}><span>11</span><Caret /></FontBox>
                        <Tool $w={22} $font='bold 16px "Liberation Serif", serif'>A<Sup>▲</Sup></Tool>
                        <Tool $w={22} $font='bold 13px "Liberation Serif", serif' $sep>A<Sup>▼</Sup></Tool>
                        <Tool $w={33} $font='bold 13px "Liberation Serif", serif' $sep>Aa<Caret /></Tool>
                        <Tool $w={24}><ClearIcon /></Tool>
                    </ToolRow>
                    <ToolRow>
                        <Tool $w={23} $font='bold 14px "Liberation Serif", serif'>N</Tool>
                        <Tool $w={23} $font='italic bold 14px "Liberation Serif", serif'>K</Tool>
                        <Tool $w={35} $font='bold 13px "Liberation Serif", serif'><u>S</u><Caret /></Tool>
                        <Tool $w={26} $font='11px "Liberation Sans", sans-serif'><s>abc</s></Tool>
                        <Tool $w={20} $font='bold 12px "Liberation Sans", sans-serif'>x<Sub>2</Sub></Tool>
                        <Tool $w={25} $font='bold 12px "Liberation Sans", sans-serif' $sep>x<Sup>2</Sup></Tool>
                        <Tool $w={38}><GlowA /><Caret /></Tool>
                        <Tool $w={34}><HighlightIcon /><Caret /></Tool>
                        <Tool $w={33}><ColorA /><Caret /></Tool>
                    </ToolRow>
                </ToolColumn>
            </GroupBody>
            <GroupLabel><LabelText>Fuente</LabelText><Launcher /></GroupLabel>
        </Group>
        <Group $w={228}>
            <GroupBody $top={11} $left={6}>
                <ToolColumn>
                    <ToolRow>
                        <Tool $w={32}><ListIcon marks="dots" /><Caret /></Tool>
                        <Tool $w={36}><ListIcon marks="nums" /><Caret /></Tool>
                        <Tool $w={36} $sep><ListIcon marks="tree" /><Caret /></Tool>
                        <Tool $w={22}><IndentIcon dir="left" /></Tool>
                        <Tool $w={22} $sep><IndentIcon dir="right" /></Tool>
                        <Tool $w={34} $sep><SortIcon /></Tool>
                        <Tool $w={33} $font='bold 17px "Liberation Serif", serif'>¶</Tool>
                    </ToolRow>
                    <ToolRow>
                        <Tool $w={23} $on><AlignIcon mode="left" /></Tool>
                        <Tool $w={24}><AlignIcon mode="center" /></Tool>
                        <Tool $w={24}><AlignIcon mode="right" /></Tool>
                        <Tool $w={24} $sep><AlignIcon mode="justify" /></Tool>
                        <Tool $w={36} $sep><SpacingIcon /><Caret /></Tool>
                        <Tool $w={38}><ShadeIcon /><Caret /></Tool>
                        <Tool $w={35}><BorderIcon /><Caret /></Tool>
                    </ToolRow>
                </ToolColumn>
            </GroupBody>
            <GroupLabel><LabelText>Párrafo</LabelText><Launcher /></GroupLabel>
        </Group>
        <Group $w={1157}>
            <GroupBody $top={3} $left={7}>
                <Gallery>
                    {galleryStyles.map(([kind, name, text], i) => (
                        <StyleItem key={name + i} $active={i === 0}>
                            <Sample $kind={kind}><span>{text}</span></Sample>
                            <StyleName $active={i === 0}>{name}</StyleName>
                        </StyleItem>
                    ))}
                    <GalleryArrows>
                        <GalleryArrow><TinyTriangle up color="#c3c7cc" /></GalleryArrow>
                        <GalleryArrow><TinyTriangle color="#60666e" /></GalleryArrow>
                        <GalleryArrow><TinyTriangle color="#60666e" /></GalleryArrow>
                    </GalleryArrows>
                </Gallery>
                <ChangeStyles>
                    <ChangeStylesIcon />
                    <ChangeLabel>Cambiar</ChangeLabel>
                    <span>estilos<Caret /></span>
                </ChangeStyles>
            </GroupBody>
            <GroupLabel><LabelText>Estilos</LabelText><Launcher /></GroupLabel>
        </Group>
        <Group $w={101}>
            <GroupBody $left={10}>
                <MenuColumn>
                    <MenuRow><MenuIcon><BinocularsIcon /></MenuIcon>Buscar<Caret $margin="0" /></MenuRow>
                    <MenuRow><MenuIcon><ReplaceIcon /></MenuIcon>Reemplazar</MenuRow>
                    <MenuRow><MenuIcon><CursorIcon /></MenuIcon>Seleccionar<Caret $margin="0" /></MenuRow>
                </MenuColumn>
            </GroupBody>
            <GroupLabel><LabelText>Edición</LabelText></GroupLabel>
        </Group>
    </Ribbon>
);

const WordWindow = () => (
    <Word>
        <TitleArea>
            <TitleBar>
                <Qat>
                    <WordLogo />
                    <SaveIcon />
                    <UndoIcon />
                    <Caret $margin="0 0 0 -3px" />
                    <RedoIcon />
                    <Caret $margin="0 0 0 4px" />
                </Qat>
                <WindowTitle>Documento6 - Microsoft Word</WindowTitle>
                <WinBox $w={106} $border="#9a9ea3" $bg="transparent">
                    <WinCell $grow={27}><MinimizeGlyph color="#777" /></WinCell>
                    <WinCell $grow={27}><RestoreGlyph color="#777" /></WinCell>
                    <WinCell $grow={52}>X</WinCell>
                </WinBox>
            </TitleBar>
            <TabRow>
                <FileTab>Archivo</FileTab>
                <RibbonTab $w={54} $active>Inicio</RibbonTab>
                {wordTabs.map(([t, w]) => <RibbonTab key={t} $w={w}>{t}</RibbonTab>)}
                <TabHelp>
                    <ChevronUp size={12} strokeWidth={2.5} />
                    <HelpBall>?</HelpBall>
                </TabHelp>
            </TabRow>
        </TitleArea>
        <WordRibbon />
        <WorkArea>
            <NavPane>
                <NavHeader>
                    <span>Navegación</span>
                    <NavHeaderTools>
                        <TinyTriangle color="#444" />
                        <X size={11} strokeWidth={3} color="#555" />
                    </NavHeaderTools>
                </NavHeader>
                <NavSearch>
                    <NavSearchText>Buscar en documento</NavSearchText>
                    <NavSearchIcon><Search size={13} strokeWidth={2.6} /></NavSearchIcon>
                    <Caret $margin="0 0 0 6px" />
                </NavSearch>
                <NavTabs>
                    <NavTab $first><NavTabIcon kind="headings" /></NavTab>
                    <NavTab><NavTabIcon kind="pages" /></NavTab>
                    <NavTab><NavTabIcon kind="results" /></NavTab>
                    <NavArrows>
                        <TinyTriangle up color="#aeb2b8" />
                        <TinyTriangle color="#aeb2b8" />
                    </NavArrows>
                </NavTabs>
                <NavContent>
                    <p>Este documento no<br />contiene títulos.</p>
                    <p>Para crear pestañas de<br />navegación, cree títulos en<br />el documento aplicando<br />estilos de títulos.</p>
                </NavContent>
            </NavPane>
            <RulerColumn>
                <RulerCorner><RulerCornerInner /></RulerCorner>
                <VRuler />
            </RulerColumn>
            <DocArea>
                <HRuler />
                <Sheet />
            </DocArea>
            <WordScroll>
                <ScrollCell $h={20} $line><TinyTriangle color="#888" /></ScrollCell>
                <ScrollCell $h={24} $line><TinyTriangle up color="#555" /></ScrollCell>
                <ScrollThumb />
                <ScrollCell $h={16}><TinyTriangle color="#555" /></ScrollCell>
            </WordScroll>
        </WorkArea>
        <StatusBar>
            <StatusCell $w={91} $pad={14}>Página: 1 de 1</StatusCell>
            <StatusCell $w={73}>Palabras: 0</StatusCell>
            <StatusCell $w={202} $pad={8}><ProofIcon /><Language>Español (alfab. internacional)</Language></StatusCell>
            <StatusRight>
                <ViewButton $on $w={19}><ViewIcon kind="page" /></ViewButton>
                <ViewButton><ViewIcon kind="book" /></ViewButton>
                <ViewButton><ViewIcon kind="web" /></ViewButton>
                <ViewButton><ViewIcon kind="outline" /></ViewButton>
                <ViewButton><ViewIcon kind="draft" /></ViewButton>
                <ZoomText>120%</ZoomText>
                <ZoomDot>−</ZoomDot>
                <ZoomTrack><ZoomThumb /></ZoomTrack>
                <ZoomDot>+</ZoomDot>
            </StatusRight>
        </StatusBar>
    </Word>
);

const App = () => (
    <>
        <GlobalStyle />
        <Screen>
            <BrowserColumn>
                <BrowserWindow />
            </BrowserColumn>
            <WordWindow />
        </Screen>
    </>
);

export default App;
